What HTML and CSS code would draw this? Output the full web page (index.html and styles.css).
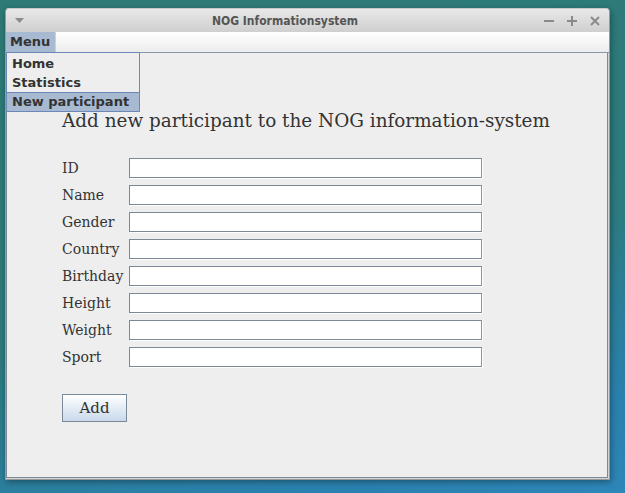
FILE: index.html
```html
<!DOCTYPE html>
<html>
<head>
<meta charset="utf-8">
<link rel="stylesheet" href="styles.css">
</head>
<body>
<div class="desktop">
  <div class="window">
    <div class="titlebar">
      <svg class="tb-menu" width="9" height="6" viewBox="0 0 9 6"><path d="M0 0H9L4.5 5Z" fill="#8a8a8a"/></svg>
      <div class="title">NOG Informationsystem</div>
      <div class="tb-buttons">
        <svg width="10" height="10" viewBox="0 0 10 10"><path d="M0 5H10" stroke="#8a8a8a" stroke-width="2"/></svg>
        <svg width="10" height="10" viewBox="0 0 10 10"><path d="M0 5H10M5 0V10" stroke="#8a8a8a" stroke-width="2"/></svg>
        <svg width="10" height="10" viewBox="0 0 10 10"><path d="M1 1L9 9M9 1L1 9" stroke="#8a8a8a" stroke-width="2"/></svg>
      </div>
    </div>
    <div class="menubar">
      <div class="menu-item active">Menu</div>
    </div>
    <div class="content">
      <div class="popup">
        <div class="popup-item">Home</div>
        <div class="popup-item">Statistics</div>
        <div class="popup-item selected">New participant</div>
      </div>
      <h1 class="heading">Add new participant to the NOG information-system</h1>
      <div class="form">
        <label class="label">ID</label><div class="field"></div>
        <label class="label">Name</label><div class="field"></div>
        <label class="label">Gender</label><div class="field"></div>
        <label class="label">Country</label><div class="field"></div>
        <label class="label">Birthday</label><div class="field"></div>
        <label class="label">Height</label><div class="field"></div>
        <label class="label">Weight</label><div class="field"></div>
        <label class="label">Sport</label><div class="field"></div>
      </div>
      <div class="button">Add</div>
    </div>
  </div>
</div>
</body>
</html>
```
FILE: styles.css
```css
html, body {
  margin: 0;
  padding: 0;
  width: 625px;
  height: 493px;
  overflow: hidden;
}
.desktop {
  width: 625px;
  height: 493px;
  background: linear-gradient(165deg, #2e7a76 0%, #2c7b7e 55%, #2a80ad 85%, #2d86b8 100%);
  padding: 8px 0 0 5px;
  box-sizing: border-box;
}
.window {
  width: 605px;
  height: 472px;
  display: flex;
  flex-direction: column;
  border-radius: 4px 4px 0 0;
  background: #d4d4d4;
  box-shadow: 1px 2px 6px rgba(0,0,0,0.35);
  border: 1px solid #9a9a9a;
  border-top-color: #c8c8c8;
  box-sizing: border-box;
  overflow: hidden;
}
.titlebar {
  height: 23px;
  flex: none;
  display: flex;
  align-items: center;
  background: linear-gradient(#e8e8e8, #cfcfcf);
  position: relative;
}
.tb-menu {
  margin-left: 9px;
  margin-top: 1px;
}
.title {
  flex: 1;
  text-align: center;
  font-family: "DejaVu Sans Condensed", "DejaVu Sans", sans-serif;
  font-weight: bold;
  font-size: 12px;
  color: #555;
  margin-left: 6px;
  margin-right: 4px;
}
.tb-buttons {
  display: flex;
  gap: 13px;
  margin-right: 9px;
}
.menubar {
  height: 20px;
  flex: none;
  display: flex;
  background: linear-gradient(#ffffff, #ececec);
  border-bottom: 1px solid #8796a8;
}
.menu-item {
  font-family: "DejaVu Sans", sans-serif;
  font-weight: bold;
  font-size: 13px;
  color: #333;
  padding: 0 5px 0 4px;
  line-height: 19px;
}
.menu-item.active {
  background: #a8bad2;
  border-right: 1px solid #c8d2df;
}
.content {
  flex: 1;
  position: relative;
  background: #eeeeee;
  border: 1px solid #7b8a99;
  border-top: none;
  margin: 0 1px 1px 0;
  padding: 58px 0 0 55px;
}
.popup {
  position: absolute;
  left: -1px;
  top: -1px;
  width: 132px;
  border: 1px solid #6d88b8;
  background: #eeeeee;
  padding-top: 1px;
}
.popup-item {
  font-family: "DejaVu Sans", sans-serif;
  font-weight: bold;
  font-size: 13px;
  color: #333;
  height: 19px;
  line-height: 19px;
  padding-left: 5px;
}
.popup-item.selected {
  background: #a8bad2;
  border-top: 1px solid #6d88b8;
  height: 18px;
  line-height: 18px;
}
.heading {
  margin: 0;
  font-family: "DejaVu Serif", serif;
  font-weight: normal;
  font-size: 18.4px;
  color: #333;
  line-height: 20px;
}
.form {
  display: grid;
  grid-template-columns: 67px 353px;
  row-gap: 7px;
  margin-top: 27px;
  align-items: center;
}
.label {
  font-family: "DejaVu Serif", serif;
  font-size: 14px;
  color: #333;
}
.field {
  height: 20px;
  box-sizing: border-box;
  background: #fff;
  border: 1px solid #7b8896;
  border-right-color: #8a96a3;
  box-shadow: 1px 1px 0 #ffffff;
}
.button {
  margin-top: 27px;
  width: 65px;
  height: 28px;
  box-sizing: border-box;
  border: 1px solid #7b8a99;
  background: linear-gradient(#ffffff 0%, #eef4fa 30%, #c9d9ea 100%);
  font-family: "DejaVu Serif", serif;
  font-size: 15px;
  color: #333;
  display: flex;
  align-items: center;
  justify-content: center;
}
```
